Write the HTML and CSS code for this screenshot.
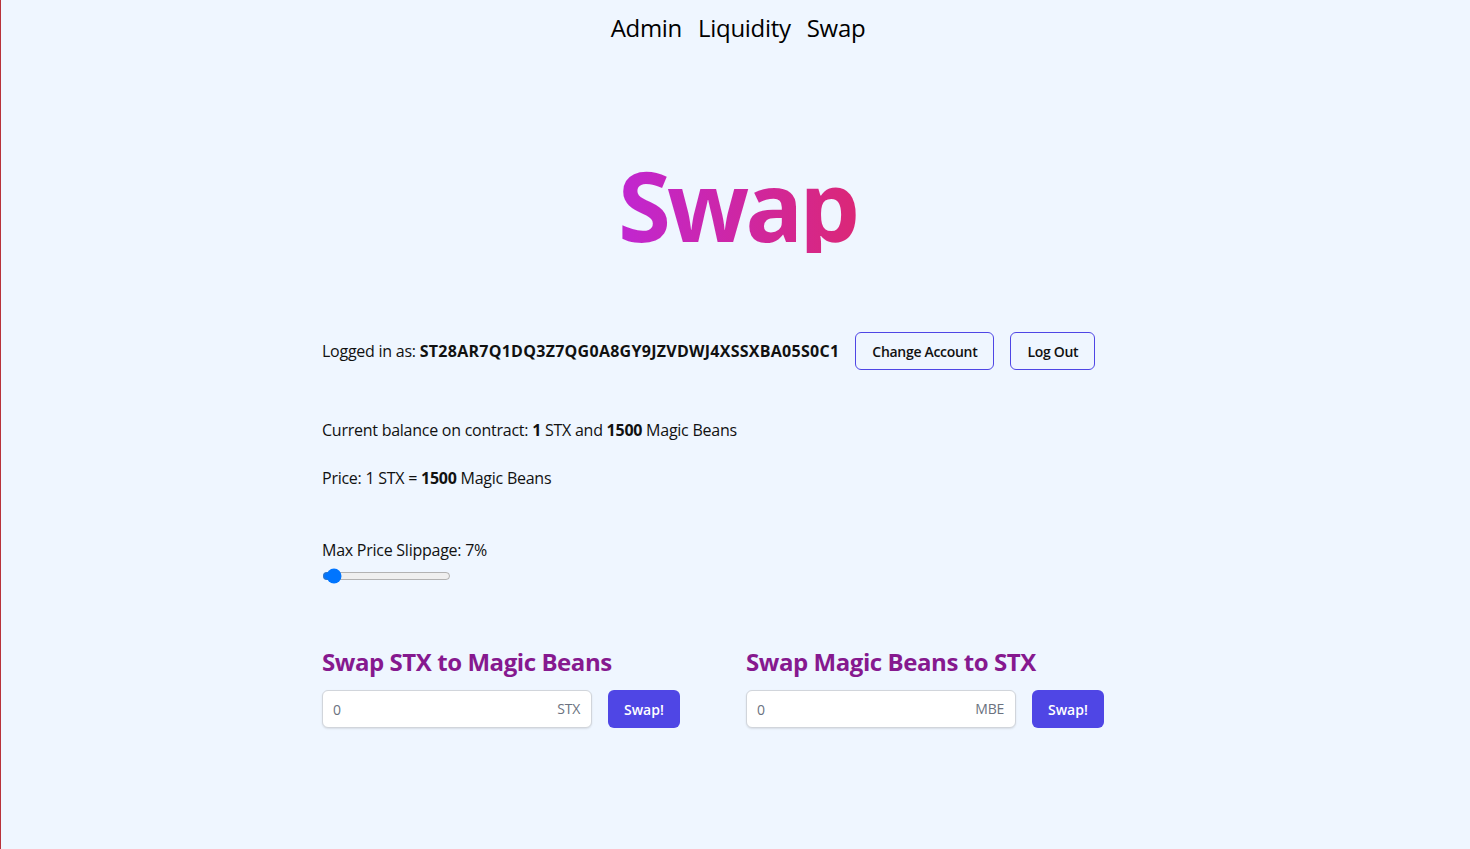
FILE: index.html
```html
<!DOCTYPE html>
<html lang="en">
<head>
<meta charset="utf-8">
<title>Swap</title>
<link rel="stylesheet" href="styles.css">
</head>
<body>
<nav class="nav">
  <a href="#">Admin</a>
  <a href="#">Liquidity</a>
  <a href="#">Swap</a>
</nav>
<main class="main">
  <h1 class="title">Swap</h1>
  <div class="account">
    <span>Logged in as: <strong class="address">ST28AR7Q1DQ3Z7QG0A8GY9JZVDWJ4XSSXBA05S0C1</strong></span>
    <button class="btn-outline">Change Account</button>
    <button class="btn-outline">Log Out</button>
  </div>
  <p class="balance">Current balance on contract: <strong>1</strong> STX and <strong>1500</strong> Magic Beans</p>
  <p class="price">Price: 1 STX = <strong>1500</strong> Magic Beans</p>
  <div class="slippage">
    <label for="slip">Max Price Slippage: 7%</label>
    <input id="slip" class="range" type="range" min="5" max="60" value="7">
  </div>
  <div class="swaps">
    <section class="swap">
      <h2>Swap STX to Magic Beans</h2>
      <div class="swap-row">
        <div class="field">
          <input type="text" placeholder="0">
          <span class="unit">STX</span>
        </div>
        <button class="btn-primary">Swap!</button>
      </div>
    </section>
    <section class="swap">
      <h2>Swap Magic Beans to STX</h2>
      <div class="swap-row">
        <div class="field">
          <input type="text" placeholder="0">
          <span class="unit">MBE</span>
        </div>
        <button class="btn-primary">Swap!</button>
      </div>
    </section>
  </div>
</main>
</body>
</html>
```

FILE: styles.css
```css
* { box-sizing: border-box; }
html, body { margin: 0; padding: 0; }
body {
  min-height: 100vh;
  background: #eff6ff;
  box-shadow: inset 1px 0 0 #b8323a;
  font-family: "Open Sans", "Noto Sans", sans-serif;
  font-size: 16px;
  line-height: 24px;
  letter-spacing: -0.25px;
  color: #111111;
}
.nav {
  display: flex;
  justify-content: center;
  gap: 16px;
  padding-top: 12px;
  padding-left: 6px;
  font-size: 24px;
  line-height: 32px;
  letter-spacing: -0.3px;
}
.nav a { color: #000; text-decoration: none; }
.main {
  width: 826px;
  margin: 0 auto;
}
.title {
  margin: 113px auto 0;
  width: max-content;
  padding-left: 4px;
  text-align: center;
  font-size: 96px;
  line-height: 96px;
  font-weight: 700;
  letter-spacing: -4px;
  background: linear-gradient(90deg, #c026d3, #db2777);
  -webkit-background-clip: text;
  background-clip: text;
  color: transparent;
}
.account {
  display: flex;
  align-items: center;
  gap: 16px;
  margin-top: 79px;
}
.address { letter-spacing: 0.27px; }
.btn-outline {
  height: 38px;
  padding: 0 16px;
  border: 1px solid #4f46e5;
  border-radius: 6px;
  background: transparent;
  font-family: inherit;
  font-size: 14px;
  font-weight: 600;
  letter-spacing: -0.3px;
  color: #111;
}
.balance { margin: 48px 0 0; }
.price { margin: 24px 0 0; }
.slippage { margin-top: 48px; }
.slippage label { display: block; }
.range { display: block; margin: 6px 0 0; width: 129px; }
.swaps {
  display: grid;
  grid-template-columns: 402px 402px;
  column-gap: 22px;
  margin-top: 62px;
}
.swap h2 {
  margin: 0;
  font-size: 24px;
  line-height: 32px;
  font-weight: 700;
  letter-spacing: -0.43px;
  color: #86198f;
}
.swap-row {
  display: flex;
  gap: 16px;
  margin-top: 12px;
}
.field {
  position: relative;
  width: 270px;
  height: 38px;
}
.field input {
  width: 100%;
  height: 100%;
  border: 1px solid #d1d5db;
  border-radius: 6px;
  background: #fff;
  box-shadow: 0 1px 2px rgba(0,0,0,0.1);
  padding: 0 48px 0 10px;
  font-family: inherit;
  font-size: 14px;
  color: #111;
}
.field input::placeholder { color: #6b7280; }
.unit {
  position: absolute;
  right: 12px;
  top: 0;
  line-height: 38px;
  font-size: 14px;
  color: #6b7280;
}
.btn-primary {
  height: 38px;
  padding: 0 16px;
  border: none;
  border-radius: 6px;
  background: #4f46e5;
  color: #fff;
  font-family: inherit;
  font-size: 14px;
  font-weight: 600;
}
```
